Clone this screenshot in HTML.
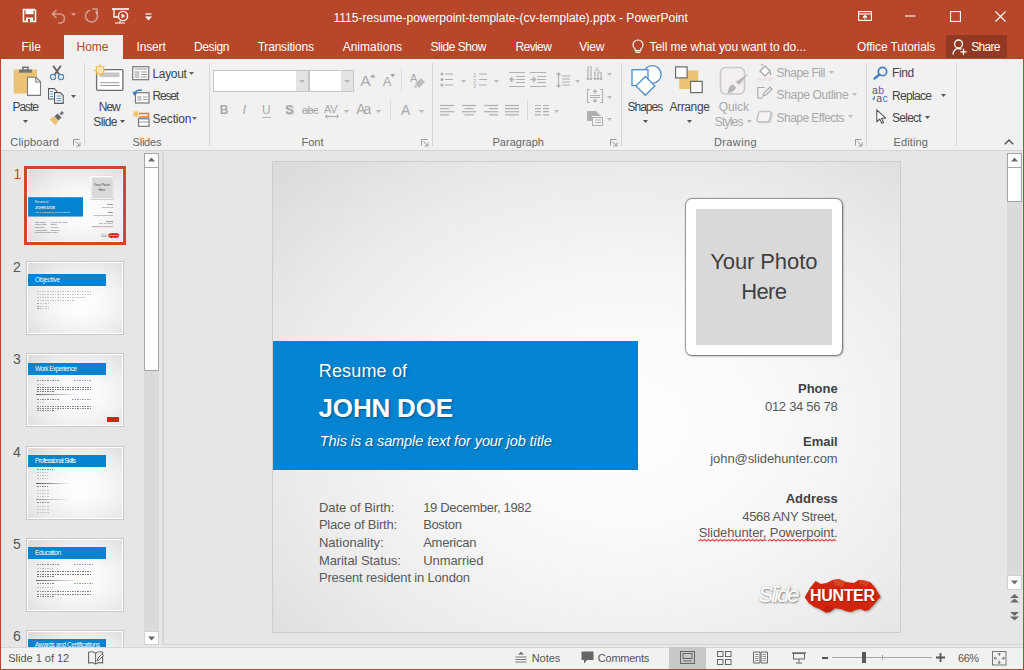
<!DOCTYPE html>
<html><head><meta charset="utf-8">
<style>
*{margin:0;padding:0;box-sizing:border-box}
html,body{width:1024px;height:670px;overflow:hidden;background:#e6e6e6;font-family:"Liberation Sans",sans-serif}
.a{position:absolute}
.t{position:absolute;white-space:nowrap;line-height:1;font-family:"Liberation Sans",sans-serif}
svg{overflow:visible}
</style></head><body>

<div class="a" style="left:0px;top:0px;width:1024px;height:59px;background:#b7472a;"></div>
<div class="a" style="left:0px;top:59px;width:1024px;height:91px;background:#f1f1f1;"></div>
<div class="a" style="left:0px;top:150px;width:1024px;height:1px;background:#d4d4d4;"></div>
<div class="a" style="left:0px;top:151px;width:1024px;height:493px;background:#e6e6e6;"></div>
<svg class="a" style="left:22px;top:8px;" width="15" height="15" viewBox="0 0 15 15"><path d="M1.5 1.5h11l1 1v11h-12z" fill="none" stroke="#fff" stroke-width="1.6"/>
<rect x="3.5" y="2" width="8" height="4.2" fill="#fff"/>
<rect x="4" y="9.5" width="7" height="4.5" fill="#fff"/><rect x="6" y="11" width="2" height="3" fill="#b7472a"/></svg>
<svg class="a" style="left:50px;top:8px;" width="16" height="15" viewBox="0 0 16 15"><path d="M3 6h7a4.5 4.5 0 0 1 0 9h-2" fill="none" stroke="rgba(255,255,255,.45)" stroke-width="1.6"/>
<path d="M6.5 2L2.5 6l4 4" fill="none" stroke="rgba(255,255,255,.45)" stroke-width="1.6"/></svg>
<svg class="a" style="left:71px;top:13px;" width="5" height="4" viewBox="0 0 5 4"><path d="M0 0h5L2.5 3z" fill="rgba(255,255,255,.45)"/></svg>
<svg class="a" style="left:84px;top:8px;" width="16" height="15" viewBox="0 0 16 15"><path d="M11.5 3.5A6 6 0 1 1 6 2.2" fill="none" stroke="rgba(255,255,255,.45)" stroke-width="1.6"/>
<path d="M8 1h5v5" fill="none" stroke="rgba(255,255,255,.45)" stroke-width="1.6"/></svg>
<svg class="a" style="left:112px;top:8px;" width="17" height="16" viewBox="0 0 17 16"><path d="M0 1h17" stroke="#fff" stroke-width="1.6"/>
<path d="M2 1v8h4" fill="none" stroke="#fff" stroke-width="1.3"/>
<circle cx="11" cy="8" r="4.6" fill="none" stroke="#fff" stroke-width="1.4"/>
<path d="M9.6 5.6v4.8l3.6-2.4z" fill="#fff"/>
<path d="M3 15h10M8 13v2" stroke="#fff" stroke-width="1.2"/></svg>
<svg class="a" style="left:145px;top:13px;" width="7" height="8" viewBox="0 0 7 8"><path d="M0.5 1h6" stroke="#fff" stroke-width="1.2"/><path d="M0 3.5h7L3.5 7.5z" fill="#fff"/></svg>
<div class="t" style="left:333.50px;top:12.04px;font-size:12px;color:#ffffff;letter-spacing:0.01px;">1115-resume-powerpoint-template-(cv-template).pptx - PowerPoint</div>
<svg class="a" style="left:858px;top:11px;" width="14" height="10" viewBox="0 0 14 10"><rect x="0.6" y="0.6" width="12.8" height="8.8" fill="none" stroke="#fff" stroke-width="1.1"/>
<path d="M0.6 3h12.8" stroke="#fff" stroke-width="1.1"/><path d="M7 8.5V4.5M5 6.5l2-2 2 2" fill="none" stroke="#fff" stroke-width="1.1"/></svg>
<svg class="a" style="left:905px;top:15px;" width="11" height="2" viewBox="0 0 11 2"><path d="M0 1h10.5" stroke="#fff" stroke-width="1.1"/></svg>
<svg class="a" style="left:950px;top:11px;" width="11" height="11" viewBox="0 0 11 11"><rect x="0.55" y="0.55" width="9.9" height="9.9" fill="none" stroke="#fff" stroke-width="1.1"/></svg>
<svg class="a" style="left:995px;top:11px;" width="11" height="11" viewBox="0 0 11 11"><path d="M0.5 0.5l10 10M10.5 0.5l-10 10" stroke="#fff" stroke-width="1.1"/></svg>
<div class="a" style="left:64px;top:35px;width:59px;height:24px;background:#f1f1f1;"></div>
<div class="t" style="left:21.50px;top:40.94px;font-size:12px;color:#ffffff;">File</div>
<div class="t" style="left:76.50px;top:40.94px;font-size:12px;color:#b7472a;">Home</div>
<div class="t" style="left:136.50px;top:40.94px;font-size:12px;color:#ffffff;letter-spacing:-0.15px;">Insert</div>
<div class="t" style="left:194.00px;top:40.94px;font-size:12px;color:#ffffff;letter-spacing:-0.4px;">Design</div>
<div class="t" style="left:257.70px;top:40.94px;font-size:12px;color:#ffffff;letter-spacing:-0.2px;">Transitions</div>
<div class="t" style="left:342.70px;top:40.94px;font-size:12px;color:#ffffff;">Animations</div>
<div class="t" style="left:430.50px;top:40.94px;font-size:12px;color:#ffffff;letter-spacing:-0.45px;">Slide Show</div>
<div class="t" style="left:515.50px;top:40.94px;font-size:12px;color:#ffffff;letter-spacing:-0.6px;">Review</div>
<div class="t" style="left:579.20px;top:40.94px;font-size:12px;color:#ffffff;letter-spacing:-0.2px;">View</div>
<svg class="a" style="left:632px;top:40px;" width="12" height="14" viewBox="0 0 12 14"><path d="M3.2 9.2C1.8 8 1 6.6 1 5a5 5 0 0 1 10 0c0 1.6-.8 3-2.2 4.2V10.6H3.2z" fill="none" stroke="#fff" stroke-width="1.1"/>
<path d="M3.5 12.3h5" stroke="#fff" stroke-width="1.1"/></svg>
<div class="t" style="left:649.50px;top:40.94px;font-size:12px;color:#ffffff;letter-spacing:-0.05px;">Tell me what you want to do...</div>
<div class="t" style="left:857.00px;top:40.94px;font-size:12px;color:#ffffff;letter-spacing:-0.1px;">Office Tutorials</div>
<div class="a" style="left:946px;top:35px;width:61px;height:23px;background:#933823;"></div>
<svg class="a" style="left:952px;top:39px;" width="15" height="16" viewBox="0 0 15 16"><circle cx="6.5" cy="5" r="4" fill="none" stroke="#fff" stroke-width="1.3"/>
<path d="M1 15.5c0-3.5 2.5-6 5.5-6 1.2 0 2.2.3 3 .8" fill="none" stroke="#fff" stroke-width="1.3"/>
<path d="M11.5 9.8v6.2M8.4 12.9h6.2" stroke="#fff" stroke-width="1.3"/></svg>
<div class="t" style="left:971.20px;top:40.94px;font-size:12px;color:#ffffff;letter-spacing:-0.7px;">Share</div>
<div class="a" style="left:84px;top:63px;width:1px;height:83px;background:#d6d6d6;"></div>
<div class="a" style="left:209px;top:63px;width:1px;height:83px;background:#d6d6d6;"></div>
<div class="a" style="left:432px;top:63px;width:1px;height:83px;background:#d6d6d6;"></div>
<div class="a" style="left:621px;top:63px;width:1px;height:83px;background:#d6d6d6;"></div>
<div class="a" style="left:866px;top:63px;width:1px;height:83px;background:#d6d6d6;"></div>
<div class="a" style="left:956px;top:63px;width:1px;height:83px;background:#d6d6d6;"></div>
<div class="t" style="left:10.30px;top:137.49px;font-size:11px;color:#666666;letter-spacing:0.201px;">Clipboard</div>
<svg class="a" style="left:73px;top:139px;" width="8" height="8" viewBox="0 0 8 8"><path d="M0.5 6.5V0.5H6.5" fill="none" stroke="#999" stroke-width="1"/><path d="M2.5 2.5l4.5 4.5M7 3.5V7H3.5" fill="none" stroke="#999" stroke-width="1"/></svg>
<div class="t" style="left:132.60px;top:137.49px;font-size:11px;color:#666666;letter-spacing:-0.234px;">Slides</div>
<div class="t" style="left:301.40px;top:137.49px;font-size:11px;color:#666666;letter-spacing:0.056px;">Font</div>
<svg class="a" style="left:421px;top:139px;" width="8" height="8" viewBox="0 0 8 8"><path d="M0.5 6.5V0.5H6.5" fill="none" stroke="#999" stroke-width="1"/><path d="M2.5 2.5l4.5 4.5M7 3.5V7H3.5" fill="none" stroke="#999" stroke-width="1"/></svg>
<div class="t" style="left:492.50px;top:137.49px;font-size:11px;color:#666666;letter-spacing:0.012px;">Paragraph</div>
<svg class="a" style="left:610px;top:139px;" width="8" height="8" viewBox="0 0 8 8"><path d="M0.5 6.5V0.5H6.5" fill="none" stroke="#999" stroke-width="1"/><path d="M2.5 2.5l4.5 4.5M7 3.5V7H3.5" fill="none" stroke="#999" stroke-width="1"/></svg>
<div class="t" style="left:714.00px;top:137.49px;font-size:11px;color:#666666;letter-spacing:0.376px;">Drawing</div>
<svg class="a" style="left:855px;top:139px;" width="8" height="8" viewBox="0 0 8 8"><path d="M0.5 6.5V0.5H6.5" fill="none" stroke="#999" stroke-width="1"/><path d="M2.5 2.5l4.5 4.5M7 3.5V7H3.5" fill="none" stroke="#999" stroke-width="1"/></svg>
<div class="t" style="left:893.60px;top:137.49px;font-size:11px;color:#666666;letter-spacing:0.124px;">Editing</div>
<svg class="a" style="left:1004px;top:139px;" width="10" height="6" viewBox="0 0 10 6"><path d="M0.8 5.2L5 1l4.2 4.2" fill="none" stroke="#555" stroke-width="1.5"/></svg>
<svg class="a" style="left:13px;top:66px;" width="30" height="31" viewBox="0 0 30 31"><rect x="0.7" y="3.5" width="23.3" height="24" fill="#ecc274"/>
<path d="M6 3.5h13v3.2H6z" fill="#767676"/><path d="M10 1.2h5v3h-5z" fill="none" stroke="#767676" stroke-width="1.6"/>
<path d="M14.5 11.3h8.5l4.5 4.5v13.6h-13z" fill="#fff" stroke="#7a7a7a" stroke-width="1.1"/>
<path d="M22.8 11.3v4.7h4.7" fill="none" stroke="#7a7a7a" stroke-width="1.1"/></svg>
<div class="t" style="left:12.40px;top:100.64px;font-size:12px;color:#444444;letter-spacing:-1.018px;">Paste</div>
<svg class="a" style="left:23px;top:120px;" width="5" height="3" viewBox="0 0 5 3"><path d="M0 0h5L2.5 3z" fill="#555"/></svg>
<svg class="a" style="left:49px;top:65px;" width="16" height="16" viewBox="0 0 16 16"><path d="M4.2 0.8l6 8.8M11.8 0.8L5.8 9.6" stroke="#606060" stroke-width="1.8"/>
<circle cx="4" cy="12" r="2.6" fill="none" stroke="#4a88c8" stroke-width="1.2"/>
<circle cx="12" cy="12" r="2.6" fill="none" stroke="#4a88c8" stroke-width="1.2"/></svg>
<svg class="a" style="left:48px;top:88px;" width="17" height="16" viewBox="0 0 17 16"><path d="M0.6 0.6h5.6l2.6 2.6V11H0.6z" fill="#fff" stroke="#555" stroke-width="1.1"/>
<path d="M2.2 3.5h3M2.2 6h3M2.2 8.5h3" stroke="#3f7fc1" stroke-width="0.9"/>
<path d="M6.6 4.6h5.6l3 3V15.4H6.6z" fill="#fff" stroke="#555" stroke-width="1.1"/>
<path d="M8.4 8h5M8.4 10.4h5M8.4 12.8h5" stroke="#3f7fc1" stroke-width="0.9"/></svg>
<svg class="a" style="left:71px;top:95px;" width="5" height="3" viewBox="0 0 5 3"><path d="M0 0h5L2.5 3z" fill="#555"/></svg>
<svg class="a" style="left:49px;top:110px;" width="16" height="16" viewBox="0 0 16 16"><path d="M0.5 9.5l4.5-3 4.5 4.5-3 4.5z" fill="#ecc274"/>
<path d="M5.5 6.5l3-3 4 4-3 3z" fill="#666"/><path d="M10.5 3.5l2.5-2.5 2 2-2.5 2.5z" fill="#777"/></svg>
<svg class="a" style="left:93px;top:64px;" width="31" height="28" viewBox="0 0 31 28"><rect x="3.6" y="5.6" width="26.3" height="20.8" rx="1.5" fill="#fff" stroke="#6e6e6e" stroke-width="1.3"/>
<rect x="7.2" y="8.4" width="19.2" height="4.8" fill="#c8c8c8"/>
<path d="M7.2 18.7h19.2M7.2 21.5h19.2" stroke="#9a9a9a" stroke-width="1"/>
<circle cx="7" cy="6.3" r="3.8" fill="#fff" stroke="#f3b440" stroke-width="1.2"/>
<g stroke="#f3b440" stroke-width="1.2"><path d="M7 0.3v1.6M7 10.7v1.6M1 6.3h1.6M11.4 6.3h1.6M2.8 2.1l1.1 1.1M10.1 9.4l1.1 1.1M11.2 2.1l-1.1 1.1M3.9 9.4l-1.1 1.1"/></g>
<circle cx="7" cy="6.3" r="2.6" fill="#fbe3a8"/></svg>
<div class="t" style="left:98.80px;top:100.64px;font-size:12px;color:#444444;letter-spacing:-1.008px;">New</div>
<div class="t" style="left:93.30px;top:116.44px;font-size:12px;color:#444444;letter-spacing:-0.647px;">Slide</div>
<svg class="a" style="left:120px;top:120px;" width="5" height="3" viewBox="0 0 5 3"><path d="M0 0h5L2.5 3z" fill="#555"/></svg>
<svg class="a" style="left:132px;top:66px;" width="18" height="15" viewBox="0 0 18 15"><rect x="0.7" y="0.7" width="16" height="13" fill="#fff" stroke="#777" stroke-width="1.2"/>
<path d="M2.5 3h12.5" stroke="#aaa" stroke-width="1.2"/><rect x="2.5" y="5" width="5" height="7" fill="#c8c8c8"/>
<path d="M9 6h6M9 8.5h6M9 11h6" stroke="#999" stroke-width="1"/></svg>
<div class="t" style="left:152.50px;top:68.44px;font-size:12px;color:#444444;letter-spacing:-0.343px;">Layout</div>
<svg class="a" style="left:189px;top:72px;" width="5" height="3" viewBox="0 0 5 3"><path d="M0 0h5L2.5 3z" fill="#666"/></svg>
<svg class="a" style="left:132px;top:88px;" width="18" height="16" viewBox="0 0 18 16"><rect x="3.5" y="4.7" width="13.5" height="10.3" fill="#fff" stroke="#777" stroke-width="1.2"/>
<rect x="5.5" y="8" width="4" height="5" fill="#c8c8c8"/><path d="M11 9h4.5M11 11.5h4.5" stroke="#999" stroke-width="1"/>
<path d="M2 6.5C3 3 6.5 1.2 10 2.5" fill="none" stroke="#3f7fc1" stroke-width="1.5"/><path d="M0.5 3.5L2 7.8 5.5 5z" fill="#3f7fc1"/></svg>
<div class="t" style="left:152.50px;top:90.44px;font-size:12px;color:#444444;letter-spacing:-1.186px;">Reset</div>
<svg class="a" style="left:132px;top:110px;" width="18" height="17" viewBox="0 0 18 17"><g stroke="#f3b440" stroke-width="1"><path d="M4 0.5v7M0.5 4h7M1.5 1.5l5 5M6.5 1.5l-5 5"/></g>
<path d="M7 3.5h9.5v3.5H7" fill="none" stroke="#e8782c" stroke-width="1.4"/>
<rect x="6.5" y="8.8" width="10.5" height="7.5" fill="#fff" stroke="#777" stroke-width="1.2"/><path d="M7 12h9.5" stroke="#999" stroke-width="1"/></svg>
<div class="t" style="left:152.50px;top:113.04px;font-size:12px;color:#444444;letter-spacing:-0.169px;">Section</div>
<svg class="a" style="left:192px;top:117px;" width="5" height="3" viewBox="0 0 5 3"><path d="M0 0h5L2.5 3z" fill="#666"/></svg>
<div class="a" style="left:213px;top:70px;width:96px;height:22px;background:#fff;border:1px solid #c6c6c6"></div>
<div class="a" style="left:296px;top:71px;width:12px;height:20px;background:#e3e3e3;"></div>
<svg class="a" style="left:299px;top:80px;" width="6" height="3" viewBox="0 0 6 3"><path d="M0 0h6L3 3z" fill="#b3b3b3"/></svg>
<div class="a" style="left:309px;top:70px;width:45px;height:22px;background:#fff;border:1px solid #c6c6c6"></div>
<div class="a" style="left:341px;top:71px;width:12px;height:20px;background:#e3e3e3;"></div>
<svg class="a" style="left:344px;top:80px;" width="6" height="3" viewBox="0 0 6 3"><path d="M0 0h6L3 3z" fill="#b3b3b3"/></svg>
<div class="t" style="left:360.20px;top:72.98px;font-size:15.5px;color:#a8a8a8;">A</div>
<svg class="a" style="left:369.5px;top:73.5px;" width="5.5" height="3.5" viewBox="0 0 5.5 3.5"><path d="M0 3.5L2.75 0 5.5 3.5z" fill="#a8a8a8"/></svg>
<div class="t" style="left:382.80px;top:75.10px;font-size:13px;color:#a8a8a8;">A</div>
<svg class="a" style="left:390px;top:73.5px;" width="5.5" height="3.5" viewBox="0 0 5.5 3.5"><path d="M0 0h5.5L2.75 3.5z" fill="#a8a8a8"/></svg>
<div class="a" style="left:401px;top:69px;width:1px;height:22px;background:#d9d9d9;"></div>
<svg class="a" style="left:410px;top:72px;" width="15" height="17" viewBox="0 0 15 17"><text x="0" y="10" font-family="Liberation Sans" font-size="11" fill="#a8a8a8">A</text>
<path d="M5 12l6-6 4 4-6 6z" fill="#bdbdbd"/><path d="M4 13.5l2.5 2.5" stroke="#bdbdbd" stroke-width="1.5"/></svg>
<div class="t" style="left:219.80px;top:104.14px;font-size:12px;color:#a8a8a8;font-weight:bold;">B</div>
<div class="t" style="left:242.50px;top:103.30px;font-size:13px;color:#a8a8a8;font-style:italic;font-family:"Liberation Serif";">I</div>
<div class="t" style="left:262.00px;top:104.14px;font-size:12px;color:#a8a8a8;">U</div>
<div class="a" style="left:262px;top:117px;width:9px;height:1px;background:#b8b8b8;"></div>
<div class="t" style="left:285.00px;top:103.30px;font-size:13px;color:#a8a8a8;font-weight:bold;text-shadow:1px 1px 1px #ccc;">S</div>
<div class="t" style="left:302.00px;top:104.99px;font-size:11px;color:#a8a8a8;letter-spacing:-0.5px;">abc</div>
<div class="a" style="left:302px;top:110px;width:16px;height:1px;background:#a8a8a8;"></div>
<div class="t" style="left:324.00px;top:103.69px;font-size:11px;color:#a8a8a8;letter-spacing:-0.3px;">AV</div>
<svg class="a" style="left:324px;top:114px;" width="16" height="5" viewBox="0 0 16 5"><path d="M1.5 2.5h13" stroke="#a8a8a8" stroke-width="1"/><path d="M3.5 0.5l-2 2 2 2M12.5 0.5l2 2-2 2" fill="none" stroke="#a8a8a8" stroke-width="1"/></svg>
<svg class="a" style="left:344px;top:110px;" width="5" height="3" viewBox="0 0 5 3"><path d="M0 0h5L2.5 3z" fill="#b8b8b8"/></svg>
<div class="t" style="left:356.30px;top:102.45px;font-size:14px;color:#a8a8a8;letter-spacing:-2.125px;">Aa</div>
<svg class="a" style="left:376px;top:110px;" width="5" height="3" viewBox="0 0 5 3"><path d="M0 0h5L2.5 3z" fill="#b8b8b8"/></svg>
<div class="a" style="left:390px;top:100px;width:1px;height:21px;background:#d9d9d9;"></div>
<div class="t" style="left:400.90px;top:103.15px;font-size:14px;color:#a8a8a8;">A</div>
<svg class="a" style="left:419px;top:110px;" width="5" height="3" viewBox="0 0 5 3"><path d="M0 0h5L2.5 3z" fill="#b8b8b8"/></svg>
<svg class="a" style="left:440px;top:72px;" width="15" height="16" viewBox="0 0 15 16"><circle cx="2" cy="2" r="1.5" fill="#b0b0b0"/><circle cx="2" cy="7.5" r="1.5" fill="#b0b0b0"/><circle cx="2" cy="13" r="1.5" fill="#b0b0b0"/>
<path d="M5 2h8M5 7.5h8M5 13h8" stroke="#b0b0b0" stroke-width="1.2"/></svg>
<svg class="a" style="left:461px;top:80px;" width="5" height="3" viewBox="0 0 5 3"><path d="M0 0h5L2.5 3z" fill="#bbb"/></svg>
<svg class="a" style="left:473px;top:71px;" width="15" height="17" viewBox="0 0 15 17"><text x="0" y="6" font-family="Liberation Sans" font-size="6" fill="#b0b0b0">1</text><text x="0" y="11.5" font-family="Liberation Sans" font-size="6" fill="#b0b0b0">2</text><text x="0" y="17" font-family="Liberation Sans" font-size="6" fill="#b0b0b0">3</text>
<path d="M6 3h8M6 8.5h8M6 14h8" stroke="#b0b0b0" stroke-width="1.2"/></svg>
<svg class="a" style="left:494px;top:80px;" width="5" height="3" viewBox="0 0 5 3"><path d="M0 0h5L2.5 3z" fill="#bbb"/></svg>
<svg class="a" style="left:509px;top:72px;" width="16" height="15" viewBox="0 0 16 15"><path d="M0 0.5h16M7 4.5h9M7 7.5h9M7 10.5h9M0 14.5h16" stroke="#b0b0b0" stroke-width="1.2"/>
<path d="M5.5 7.5H1M3.5 5l-2.5 2.5 2.5 2.5" fill="none" stroke="#b0b0b0" stroke-width="1.4"/></svg>
<svg class="a" style="left:530px;top:72px;" width="16" height="15" viewBox="0 0 16 15"><path d="M0 0.5h16M7 4.5h9M7 7.5h9M7 10.5h9M0 14.5h16" stroke="#b0b0b0" stroke-width="1.2"/>
<path d="M0.5 7.5H5M3 5l2.5 2.5L3 10" fill="none" stroke="#b0b0b0" stroke-width="1.4"/></svg>
<svg class="a" style="left:556px;top:72px;" width="14" height="16" viewBox="0 0 14 16"><path d="M2.5 1v14M0.5 3l2-2 2 2M0.5 13l2 2 2-2" fill="none" stroke="#b0b0b0" stroke-width="1.2"/>
<path d="M6 4h8M6 7h8M6 10h8M6 13h8" stroke="#b0b0b0" stroke-width="1.2"/></svg>
<svg class="a" style="left:575px;top:80px;" width="5" height="3" viewBox="0 0 5 3"><path d="M0 0h5L2.5 3z" fill="#bbb"/></svg>
<svg class="a" style="left:587px;top:66px;" width="16" height="15" viewBox="0 0 16 15"><path d="M1 0v14M4 0v14M8 6v8M11 6v8M14 6v8" stroke="#b0b0b0" stroke-width="1.2"/>
<path d="M6.5 12l1.5 2 1.5-2M9.5 12l1.5 2 1.5-2M12.5 12l1.5 2 1.5-2M-.5 12l1.5 2 1.5-2M2.5 12l1.5 2 1.5-2" fill="none" stroke="#b0b0b0" stroke-width="1"/>
<text x="7" y="7" font-family="Liberation Sans" font-size="9" fill="#b0b0b0">A</text></svg>
<svg class="a" style="left:607px;top:73px;" width="5" height="3" viewBox="0 0 5 3"><path d="M0 0h5L2.5 3z" fill="#bbb"/></svg>
<svg class="a" style="left:587px;top:89px;" width="16" height="14" viewBox="0 0 16 14"><path d="M3 0.5H0.5v13H3M13 0.5h2.5v13H13" fill="none" stroke="#b0b0b0" stroke-width="1.1"/>
<path d="M3 6.5h10M3 8.5h10" stroke="#b0b0b0" stroke-width="1"/>
<path d="M8 1v4M6 3l2-2 2 2M8 13V9.5M6 11l2 2 2-2" fill="none" stroke="#b0b0b0" stroke-width="1.1"/></svg>
<svg class="a" style="left:607px;top:96px;" width="5" height="3" viewBox="0 0 5 3"><path d="M0 0h5L2.5 3z" fill="#bbb"/></svg>
<svg class="a" style="left:587px;top:111px;" width="16" height="15" viewBox="0 0 16 15"><path d="M0 0h9l5 5H5v5H0z" fill="#b0b0b0"/>
<rect x="5.5" y="6.5" width="10" height="8" fill="#f5f2f5" stroke="#b0b0b0" stroke-width="1"/>
<path d="M8 9h6M8 11.5h6" stroke="#b0b0b0" stroke-width="1"/></svg>
<svg class="a" style="left:607px;top:118px;" width="5" height="3" viewBox="0 0 5 3"><path d="M0 0h5L2.5 3z" fill="#bbb"/></svg>
<svg class="a" style="left:440px;top:105px;" width="14" height="11" viewBox="0 0 14 11"><path d="M0 0.5h14" stroke="#b0b0b0" stroke-width="1.2"/><path d="M0 3.6h9" stroke="#b0b0b0" stroke-width="1.2"/><path d="M0 6.7h14" stroke="#b0b0b0" stroke-width="1.2"/><path d="M0 9.8h9" stroke="#b0b0b0" stroke-width="1.2"/></svg>
<svg class="a" style="left:462px;top:105px;" width="14" height="11" viewBox="0 0 14 11"><path d="M0 0.5h14" stroke="#b0b0b0" stroke-width="1.2"/><path d="M2.5 3.6h9" stroke="#b0b0b0" stroke-width="1.2"/><path d="M0 6.7h14" stroke="#b0b0b0" stroke-width="1.2"/><path d="M2.5 9.8h9" stroke="#b0b0b0" stroke-width="1.2"/></svg>
<svg class="a" style="left:484px;top:105px;" width="14" height="11" viewBox="0 0 14 11"><path d="M0 0.5h14" stroke="#b0b0b0" stroke-width="1.2"/><path d="M5 3.6h9" stroke="#b0b0b0" stroke-width="1.2"/><path d="M0 6.7h14" stroke="#b0b0b0" stroke-width="1.2"/><path d="M5 9.8h9" stroke="#b0b0b0" stroke-width="1.2"/></svg>
<svg class="a" style="left:505px;top:105px;" width="14" height="11" viewBox="0 0 14 11"><path d="M0 0.5h14" stroke="#b0b0b0" stroke-width="1.2"/><path d="M0 3.6h14" stroke="#b0b0b0" stroke-width="1.2"/><path d="M0 6.7h14" stroke="#b0b0b0" stroke-width="1.2"/><path d="M0 9.8h14" stroke="#b0b0b0" stroke-width="1.2"/></svg>
<div class="a" style="left:527px;top:100px;width:1px;height:21px;background:#d9d9d9;"></div>
<svg class="a" style="left:535px;top:105px;" width="14" height="11" viewBox="0 0 14 11"><path d="M0 0.5h6M8 0.5h6M0 3.6h6M8 3.6h6M0 6.7h6M8 6.7h6M0 9.8h6M8 9.8h6" stroke="#b0b0b0" stroke-width="1.2"/></svg>
<svg class="a" style="left:554px;top:110px;" width="5" height="3" viewBox="0 0 5 3"><path d="M0 0h5L2.5 3z" fill="#bbb"/></svg>
<svg class="a" style="left:630px;top:65px;" width="34" height="38" viewBox="0 0 34 38"><circle cx="22.3" cy="9.5" r="8.8" fill="#fff" stroke="#4f8ccb" stroke-width="1.3"/>
<rect x="2" y="4.7" width="16" height="15.8" fill="#fff" stroke="#4f8ccb" stroke-width="1.3"/>
<path d="M15.4 11.5l9.4 9.4-9.4 9.4-9.4-9.4z" fill="#fff" stroke="#4f8ccb" stroke-width="1.3"/></svg>
<div class="t" style="left:627.50px;top:100.64px;font-size:12px;color:#444444;letter-spacing:-0.997px;">Shapes</div>
<svg class="a" style="left:643px;top:120px;" width="5" height="3" viewBox="0 0 5 3"><path d="M0 0h5L2.5 3z" fill="#555"/></svg>
<svg class="a" style="left:674px;top:66px;" width="30" height="28" viewBox="0 0 30 28"><rect x="5.2" y="4.5" width="19" height="18.5" fill="#ecc274"/>
<rect x="1.6" y="0.9" width="11.5" height="11" fill="#fff" stroke="#6a6a6a" stroke-width="1.2"/>
<rect x="16.6" y="15.4" width="11.6" height="11.2" fill="#fff" stroke="#6a6a6a" stroke-width="1.2"/></svg>
<div class="t" style="left:669.40px;top:100.64px;font-size:12px;color:#444444;letter-spacing:-0.365px;">Arrange</div>
<svg class="a" style="left:687px;top:120px;" width="5" height="3" viewBox="0 0 5 3"><path d="M0 0h5L2.5 3z" fill="#555"/></svg>
<svg class="a" style="left:719px;top:66px;" width="30" height="30" viewBox="0 0 30 30"><rect x="1.5" y="1.5" width="24" height="26.5" rx="5" fill="#f3eff3" stroke="#c9c9c9" stroke-width="1.6"/>
<path d="M29.5 7.5L20 19l-3.2-3.2z" fill="#b5b5b5"/><path d="M16.5 16.5l3 3-1.5 1.5-3-3z" fill="#f1f1f1"/>
<path d="M14.2 18.5c-2.5 0-4.6 2.6-5.6 8.8 4.6-.8 7.6-2.8 8.4-6z" fill="#b5b5b5"/></svg>
<div class="t" style="left:718.80px;top:100.64px;font-size:12px;color:#a8a8a8;letter-spacing:-0.118px;">Quick</div>
<div class="t" style="left:714.70px;top:116.44px;font-size:12px;color:#a8a8a8;letter-spacing:-0.774px;">Styles</div>
<svg class="a" style="left:747px;top:120px;" width="5" height="3" viewBox="0 0 5 3"><path d="M0 0h5L2.5 3z" fill="#bbb"/></svg>
<svg class="a" style="left:757px;top:64px;" width="17" height="17" viewBox="0 0 17 17"><path d="M3 7l5-5 5 5-5 5z" fill="#fff" stroke="#a8a8a8" stroke-width="1.3"/>
<path d="M6 1.5L4.5 0" stroke="#a8a8a8" stroke-width="1.2"/><path d="M13 7.5c1.5 1.5 2 3 1 3.5s-2-1.5-1-3.5z" fill="#a8a8a8"/>
<rect x="0.5" y="14" width="15" height="2.5" fill="#eee0e4"/></svg>
<div class="t" style="left:776.60px;top:67.04px;font-size:12px;color:#a8a8a8;letter-spacing:-0.518px;">Shape Fill</div>
<svg class="a" style="left:829px;top:71px;" width="5" height="3" viewBox="0 0 5 3"><path d="M0 0h5L2.5 3z" fill="#bbb"/></svg>
<svg class="a" style="left:757px;top:86px;" width="16" height="13" viewBox="0 0 16 13"><path d="M7.5 1.5H0.8v10.5h5" fill="none" stroke="#a8a8a8" stroke-width="1.1"/>
<path d="M6 10l1-3 6-6 2 2-6 6z" fill="none" stroke="#a8a8a8" stroke-width="1.1"/></svg>
<div class="t" style="left:776.60px;top:89.04px;font-size:12px;color:#a8a8a8;letter-spacing:-0.336px;">Shape Outline</div>
<svg class="a" style="left:852px;top:93px;" width="5" height="3" viewBox="0 0 5 3"><path d="M0 0h5L2.5 3z" fill="#bbb"/></svg>
<svg class="a" style="left:757px;top:110px;filter:drop-shadow(1px 1px 0.5px rgba(0,0,0,.15))" width="15" height="13" viewBox="0 0 15 13"><path d="M3.5 1.5h9c1.2 0 1.8.8 1.5 2l-1.6 6.5c-.3 1.1-1 1.6-2 1.6h-9c-1.1 0-1.7-.8-1.4-1.9l1.6-6.5c.3-1.1 1-1.7 1.9-1.7z" fill="#f6f2f6" stroke="#c4c4c4" stroke-width="1.4"/></svg>
<div class="t" style="left:776.60px;top:111.64px;font-size:12px;color:#a8a8a8;letter-spacing:-0.546px;">Shape Effects</div>
<svg class="a" style="left:848px;top:115px;" width="5" height="3" viewBox="0 0 5 3"><path d="M0 0h5L2.5 3z" fill="#bbb"/></svg>
<svg class="a" style="left:873px;top:66px;" width="15" height="13" viewBox="0 0 15 13"><circle cx="9.5" cy="5.5" r="4.2" fill="none" stroke="#3f7fc1" stroke-width="1.7"/>
<path d="M6.5 8.5L1.5 12.5" stroke="#3f7fc1" stroke-width="2.4" stroke-linecap="round"/></svg>
<div class="t" style="left:892.00px;top:67.04px;font-size:12px;color:#444444;letter-spacing:-0.415px;">Find</div>
<svg class="a" style="left:872px;top:86px;" width="17" height="17" viewBox="0 0 17 17"><text x="0" y="8" font-family="Liberation Sans" font-size="10.5" fill="#555">a</text>
<text x="6.2" y="8" font-family="Liberation Sans" font-size="10.5" fill="#8a4fb8">b</text>
<text x="4.2" y="16" font-family="Liberation Sans" font-size="10.5" fill="#555">a</text>
<text x="10.4" y="16" font-family="Liberation Sans" font-size="10.5" fill="#3f7fc1">c</text>
<path d="M2.3 10v3H0.8M2 11.8l-1.2 1.2 1.2 1.2" fill="none" stroke="#3f7fc1" stroke-width="1"/></svg>
<div class="t" style="left:892.00px;top:89.84px;font-size:12px;color:#444444;letter-spacing:-0.672px;">Replace</div>
<svg class="a" style="left:941px;top:94px;" width="5" height="3" viewBox="0 0 5 3"><path d="M0 0h5L2.5 3z" fill="#555"/></svg>
<svg class="a" style="left:876px;top:109px;" width="10" height="15" viewBox="0 0 10 15"><path d="M0.8 0.8v12l3-2.8 2 4.2 1.8-.8-2-4.2h4z" fill="#fff" stroke="#555" stroke-width="1.1" stroke-linejoin="round"/></svg>
<div class="t" style="left:892.00px;top:111.84px;font-size:12px;color:#444444;letter-spacing:-0.729px;">Select</div>
<svg class="a" style="left:925px;top:116px;" width="5" height="3" viewBox="0 0 5 3"><path d="M0 0h5L2.5 3z" fill="#555"/></svg>
<div class="a" style="left:144px;top:153px;width:15px;height:492px;background:#dadada;"></div>
<div class="a" style="left:144px;top:153px;width:15px;height:15px;background:#fff;border:1px solid #a6a6a6"></div>
<svg class="a" style="left:148px;top:157px;" width="7" height="5" viewBox="0 0 7 5"><path d="M0 4.6L3.5 0.6 7 4.6z" fill="#686868"/></svg>
<div class="a" style="left:144px;top:167px;width:15px;height:204px;background:#fff;border:1px solid #a6a6a6"></div>
<div class="a" style="left:144px;top:631px;width:15px;height:14px;background:#fff;border:1px solid #d0d0d0"></div>
<svg class="a" style="left:148px;top:636px;" width="7" height="5" viewBox="0 0 7 5"><path d="M0 0.4h7L3.5 4.4z" fill="#686868"/></svg>
<div class="a" style="left:162px;top:153px;width:2px;height:492px;background:#d6d6d6;"></div>
<div class="a" style="left:24px;top:166px;width:102px;height:79px;background:transparent;border:3px solid #d24726"></div>
<div class="a" style="left:27px;top:169px;width:96px;height:73px;background:#fff;"></div>
<div class="t" style="left:13.40px;top:166.95px;font-size:14px;color:#d24726;">1</div>
<div class="a" style="left:26px;top:261px;width:98px;height:74px;background:#fff;border:1px solid #c9c9c9"></div>
<div class="t" style="left:13.00px;top:259.65px;font-size:14px;color:#555;">2</div>
<div class="a" style="left:26px;top:353px;width:98px;height:74px;background:#fff;border:1px solid #c9c9c9"></div>
<div class="t" style="left:13.00px;top:351.65px;font-size:14px;color:#555;">3</div>
<div class="a" style="left:26px;top:446px;width:98px;height:74px;background:#fff;border:1px solid #c9c9c9"></div>
<div class="t" style="left:13.00px;top:444.65px;font-size:14px;color:#555;">4</div>
<div class="a" style="left:26px;top:538px;width:98px;height:74px;background:#fff;border:1px solid #c9c9c9"></div>
<div class="t" style="left:13.00px;top:536.65px;font-size:14px;color:#555;">5</div>
<div class="a" style="left:26px;top:630px;width:98px;height:74px;background:#fff;border:1px solid #c9c9c9"></div>
<div class="t" style="left:13.00px;top:628.65px;font-size:14px;color:#555;">6</div>
<div class="a" style="left:28px;top:263px;width:94px;height:70px;background:radial-gradient(ellipse 75% 75% at 56% 56%, #ffffff 0%, #fafafa 30%, #ececec 70%, #dcdcdc 100%);overflow:hidden"><div class="a" style="left:0;top:11px;width:78px;height:12px;background:#0383d0"></div><div class="t" style="left:7px;top:14px;font-size:6.5px;color:#fff;letter-spacing:-0.260px">Objective</div><div class="a" style="left:9px;top:28px;width:55px;height:1px;background:repeating-linear-gradient(90deg,#c2c2c2 0 2px,rgba(0,0,0,0) 2px 2.6px,#c2c2c2 2.6px 4px,rgba(0,0,0,0) 4px 5px)"></div><div class="a" style="left:9px;top:31px;width:55px;height:1px;background:repeating-linear-gradient(90deg,#c2c2c2 0 2px,rgba(0,0,0,0) 2px 2.6px,#c2c2c2 2.6px 4px,rgba(0,0,0,0) 4px 5px)"></div><div class="a" style="left:9px;top:34px;width:49px;height:1px;background:repeating-linear-gradient(90deg,#c2c2c2 0 2px,rgba(0,0,0,0) 2px 2.6px,#c2c2c2 2.6px 4px,rgba(0,0,0,0) 4px 5px)"></div><div class="a" style="left:9px;top:37px;width:38px;height:1px;background:repeating-linear-gradient(90deg,#c2c2c2 0 2px,rgba(0,0,0,0) 2px 2.6px,#c2c2c2 2.6px 4px,rgba(0,0,0,0) 4px 5px)"></div><div class="a" style="left:9px;top:40.0px;width:2px;height:1px;background:repeating-linear-gradient(90deg,#a0a0a0 0 2px,rgba(0,0,0,0) 2px 2.6px,#a0a0a0 2.6px 4px,rgba(0,0,0,0) 4px 5px)"></div><div class="a" style="left:12px;top:40.0px;width:9px;height:1px;background:repeating-linear-gradient(90deg,#c4c4c4 0 2px,rgba(0,0,0,0) 2px 2.6px,#c4c4c4 2.6px 4px,rgba(0,0,0,0) 4px 5px)"></div><div class="a" style="left:9px;top:42.6px;width:2px;height:1px;background:repeating-linear-gradient(90deg,#a0a0a0 0 2px,rgba(0,0,0,0) 2px 2.6px,#a0a0a0 2.6px 4px,rgba(0,0,0,0) 4px 5px)"></div><div class="a" style="left:12px;top:42.6px;width:9px;height:1px;background:repeating-linear-gradient(90deg,#c4c4c4 0 2px,rgba(0,0,0,0) 2px 2.6px,#c4c4c4 2.6px 4px,rgba(0,0,0,0) 4px 5px)"></div><div class="a" style="left:9px;top:45.2px;width:2px;height:1px;background:repeating-linear-gradient(90deg,#a0a0a0 0 2px,rgba(0,0,0,0) 2px 2.6px,#a0a0a0 2.6px 4px,rgba(0,0,0,0) 4px 5px)"></div><div class="a" style="left:12px;top:45.2px;width:9px;height:1px;background:repeating-linear-gradient(90deg,#c4c4c4 0 2px,rgba(0,0,0,0) 2px 2.6px,#c4c4c4 2.6px 4px,rgba(0,0,0,0) 4px 5px)"></div></div>
<div class="a" style="left:28px;top:355px;width:94px;height:70px;background:radial-gradient(ellipse 75% 75% at 56% 56%, #ffffff 0%, #fafafa 30%, #ececec 70%, #dcdcdc 100%);overflow:hidden"><div class="a" style="left:0;top:8px;width:78px;height:12px;background:#0383d0"></div><div class="t" style="left:7px;top:11px;font-size:6.5px;color:#fff;letter-spacing:-0.525px">Work Experience</div><div class="a" style="left:9px;top:25px;width:22px;height:1px;background:repeating-linear-gradient(90deg,#888 0 2px,rgba(0,0,0,0) 2px 2.6px,#888 2.6px 4px,rgba(0,0,0,0) 4px 5px)"></div><div class="a" style="left:46px;top:25px;width:18px;height:1px;background:repeating-linear-gradient(90deg,#8e9ed8 0 2px,rgba(0,0,0,0) 2px 2.6px,#8e9ed8 2.6px 4px,rgba(0,0,0,0) 4px 5px)"></div><div class="a" style="left:9px;top:29px;width:8px;height:1px;background:repeating-linear-gradient(90deg,#c4c4c4 0 2px,rgba(0,0,0,0) 2px 2.6px,#c4c4c4 2.6px 4px,rgba(0,0,0,0) 4px 5px)"></div><div class="a" style="left:9px;top:31.5px;width:55px;height:1px;background:repeating-linear-gradient(90deg,#777 0 2px,rgba(0,0,0,0) 2px 2.6px,#777 2.6px 4px,rgba(0,0,0,0) 4px 5px)"></div><div class="a" style="left:9px;top:33.8px;width:55px;height:1px;background:repeating-linear-gradient(90deg,#777 0 2px,rgba(0,0,0,0) 2px 2.6px,#777 2.6px 4px,rgba(0,0,0,0) 4px 5px)"></div><div class="a" style="left:9px;top:36.1px;width:18px;height:1px;background:repeating-linear-gradient(90deg,#777 0 2px,rgba(0,0,0,0) 2px 2.6px,#777 2.6px 4px,rgba(0,0,0,0) 4px 5px)"></div><div class="a" style="left:8px;top:39px;width:42px;height:1px;background:linear-gradient(90deg,#666,rgba(120,120,120,0))"></div><div class="a" style="left:9px;top:43.5px;width:22px;height:1px;background:repeating-linear-gradient(90deg,#888 0 2px,rgba(0,0,0,0) 2px 2.6px,#888 2.6px 4px,rgba(0,0,0,0) 4px 5px)"></div><div class="a" style="left:44px;top:43.5px;width:20px;height:1px;background:repeating-linear-gradient(90deg,#8e9ed8 0 2px,rgba(0,0,0,0) 2px 2.6px,#8e9ed8 2.6px 4px,rgba(0,0,0,0) 4px 5px)"></div><div class="a" style="left:9px;top:47px;width:8px;height:1px;background:repeating-linear-gradient(90deg,#c4c4c4 0 2px,rgba(0,0,0,0) 2px 2.6px,#c4c4c4 2.6px 4px,rgba(0,0,0,0) 4px 5px)"></div><div class="a" style="left:9px;top:50.5px;width:55px;height:1px;background:repeating-linear-gradient(90deg,#888 0 2px,rgba(0,0,0,0) 2px 2.6px,#888 2.6px 4px,rgba(0,0,0,0) 4px 5px)"></div><div class="a" style="left:9px;top:52.9px;width:55px;height:1px;background:repeating-linear-gradient(90deg,#888 0 2px,rgba(0,0,0,0) 2px 2.6px,#888 2.6px 4px,rgba(0,0,0,0) 4px 5px)"></div><div class="a" style="left:9px;top:55.3px;width:18px;height:1px;background:repeating-linear-gradient(90deg,#888 0 2px,rgba(0,0,0,0) 2px 2.6px,#888 2.6px 4px,rgba(0,0,0,0) 4px 5px)"></div><div class="a" style="left:79px;top:61.5px;width:12px;height:5px;background:#d0240c"></div></div>
<div class="a" style="left:28px;top:448px;width:94px;height:70px;background:radial-gradient(ellipse 75% 75% at 56% 56%, #ffffff 0%, #fafafa 30%, #ececec 70%, #dcdcdc 100%);overflow:hidden"><div class="a" style="left:0;top:7px;width:78px;height:12px;background:#0383d0"></div><div class="t" style="left:7px;top:10px;font-size:6.5px;color:#fff;letter-spacing:-0.649px">Professional Skills</div><div class="a" style="left:9px;top:21px;width:16px;height:1px;background:repeating-linear-gradient(90deg,#888 0 2px,rgba(0,0,0,0) 2px 2.6px,#888 2.6px 4px,rgba(0,0,0,0) 4px 5px)"></div><div class="a" style="left:9px;top:24px;width:11px;height:1px;background:repeating-linear-gradient(90deg,#c0c0c0 0 2px,rgba(0,0,0,0) 2px 2.6px,#c0c0c0 2.6px 4px,rgba(0,0,0,0) 4px 5px)"></div><div class="a" style="left:9px;top:27px;width:11px;height:1px;background:repeating-linear-gradient(90deg,#c0c0c0 0 2px,rgba(0,0,0,0) 2px 2.6px,#c0c0c0 2.6px 4px,rgba(0,0,0,0) 4px 5px)"></div><div class="a" style="left:9px;top:30px;width:11px;height:1px;background:repeating-linear-gradient(90deg,#c0c0c0 0 2px,rgba(0,0,0,0) 2px 2.6px,#c0c0c0 2.6px 4px,rgba(0,0,0,0) 4px 5px)"></div><div class="a" style="left:8px;top:35px;width:34px;height:1px;background:linear-gradient(90deg,#555,rgba(120,120,120,0))"></div><div class="a" style="left:9px;top:38px;width:11px;height:1px;background:repeating-linear-gradient(90deg,#888 0 2px,rgba(0,0,0,0) 2px 2.6px,#888 2.6px 4px,rgba(0,0,0,0) 4px 5px)"></div><div class="a" style="left:9px;top:42px;width:12px;height:1px;background:repeating-linear-gradient(90deg,#c4c4c4 0 2px,rgba(0,0,0,0) 2px 2.6px,#c4c4c4 2.6px 4px,rgba(0,0,0,0) 4px 5px)"></div><div class="a" style="left:9px;top:45px;width:12px;height:1px;background:repeating-linear-gradient(90deg,#c4c4c4 0 2px,rgba(0,0,0,0) 2px 2.6px,#c4c4c4 2.6px 4px,rgba(0,0,0,0) 4px 5px)"></div><div class="a" style="left:9px;top:48px;width:12px;height:1px;background:repeating-linear-gradient(90deg,#c4c4c4 0 2px,rgba(0,0,0,0) 2px 2.6px,#c4c4c4 2.6px 4px,rgba(0,0,0,0) 4px 5px)"></div><div class="a" style="left:8px;top:51px;width:34px;height:1px;background:linear-gradient(90deg,#999,rgba(120,120,120,0))"></div><div class="a" style="left:9px;top:54px;width:12px;height:1px;background:repeating-linear-gradient(90deg,#888 0 2px,rgba(0,0,0,0) 2px 2.6px,#888 2.6px 4px,rgba(0,0,0,0) 4px 5px)"></div><div class="a" style="left:9px;top:58px;width:12px;height:1px;background:repeating-linear-gradient(90deg,#c4c4c4 0 2px,rgba(0,0,0,0) 2px 2.6px,#c4c4c4 2.6px 4px,rgba(0,0,0,0) 4px 5px)"></div><div class="a" style="left:9px;top:61px;width:12px;height:1px;background:repeating-linear-gradient(90deg,#c4c4c4 0 2px,rgba(0,0,0,0) 2px 2.6px,#c4c4c4 2.6px 4px,rgba(0,0,0,0) 4px 5px)"></div><div class="a" style="left:9px;top:64px;width:12px;height:1px;background:repeating-linear-gradient(90deg,#c4c4c4 0 2px,rgba(0,0,0,0) 2px 2.6px,#c4c4c4 2.6px 4px,rgba(0,0,0,0) 4px 5px)"></div></div>
<div class="a" style="left:28px;top:540px;width:94px;height:70px;background:radial-gradient(ellipse 75% 75% at 56% 56%, #ffffff 0%, #fafafa 30%, #ececec 70%, #dcdcdc 100%);overflow:hidden"><div class="a" style="left:0;top:7px;width:78px;height:12px;background:#0383d0"></div><div class="t" style="left:7px;top:10px;font-size:6.5px;color:#fff;letter-spacing:-0.359px">Education</div><div class="a" style="left:9px;top:24px;width:22px;height:1px;background:repeating-linear-gradient(90deg,#888 0 2px,rgba(0,0,0,0) 2px 2.6px,#888 2.6px 4px,rgba(0,0,0,0) 4px 5px)"></div><div class="a" style="left:46px;top:24px;width:20px;height:1px;background:repeating-linear-gradient(90deg,#8e9ed8 0 2px,rgba(0,0,0,0) 2px 2.6px,#8e9ed8 2.6px 4px,rgba(0,0,0,0) 4px 5px)"></div><div class="a" style="left:9px;top:28px;width:16px;height:1px;background:repeating-linear-gradient(90deg,#c4c4c4 0 2px,rgba(0,0,0,0) 2px 2.6px,#c4c4c4 2.6px 4px,rgba(0,0,0,0) 4px 5px)"></div><div class="a" style="left:9px;top:31.0px;width:55px;height:1px;background:repeating-linear-gradient(90deg,#777 0 2px,rgba(0,0,0,0) 2px 2.6px,#777 2.6px 4px,rgba(0,0,0,0) 4px 5px)"></div><div class="a" style="left:9px;top:33.6px;width:55px;height:1px;background:repeating-linear-gradient(90deg,#777 0 2px,rgba(0,0,0,0) 2px 2.6px,#777 2.6px 4px,rgba(0,0,0,0) 4px 5px)"></div><div class="a" style="left:9px;top:36.2px;width:18px;height:1px;background:repeating-linear-gradient(90deg,#777 0 2px,rgba(0,0,0,0) 2px 2.6px,#777 2.6px 4px,rgba(0,0,0,0) 4px 5px)"></div><div class="a" style="left:8px;top:40px;width:42px;height:1px;background:linear-gradient(90deg,#666,rgba(120,120,120,0))"></div><div class="a" style="left:9px;top:43px;width:18px;height:1px;background:repeating-linear-gradient(90deg,#888 0 2px,rgba(0,0,0,0) 2px 2.6px,#888 2.6px 4px,rgba(0,0,0,0) 4px 5px)"></div><div class="a" style="left:46px;top:43px;width:20px;height:1px;background:repeating-linear-gradient(90deg,#8e9ed8 0 2px,rgba(0,0,0,0) 2px 2.6px,#8e9ed8 2.6px 4px,rgba(0,0,0,0) 4px 5px)"></div><div class="a" style="left:9px;top:47px;width:16px;height:1px;background:repeating-linear-gradient(90deg,#c4c4c4 0 2px,rgba(0,0,0,0) 2px 2.6px,#c4c4c4 2.6px 4px,rgba(0,0,0,0) 4px 5px)"></div><div class="a" style="left:9px;top:51.0px;width:55px;height:1px;background:repeating-linear-gradient(90deg,#888 0 2px,rgba(0,0,0,0) 2px 2.6px,#888 2.6px 4px,rgba(0,0,0,0) 4px 5px)"></div><div class="a" style="left:9px;top:53.6px;width:55px;height:1px;background:repeating-linear-gradient(90deg,#888 0 2px,rgba(0,0,0,0) 2px 2.6px,#888 2.6px 4px,rgba(0,0,0,0) 4px 5px)"></div><div class="a" style="left:9px;top:56.2px;width:18px;height:1px;background:repeating-linear-gradient(90deg,#888 0 2px,rgba(0,0,0,0) 2px 2.6px,#888 2.6px 4px,rgba(0,0,0,0) 4px 5px)"></div></div>
<div class="a" style="left:28px;top:632px;width:94px;height:70px;background:radial-gradient(ellipse 75% 75% at 56% 56%, #ffffff 0%, #fafafa 30%, #ececec 70%, #dcdcdc 100%);overflow:hidden"><div class="a" style="left:0;top:7px;width:78px;height:12px;background:#0383d0"></div><div class="t" style="left:7px;top:10px;font-size:6.5px;color:#fff;letter-spacing:-0.355px">Awards and Certifications</div></div>
<div class="a" style="left:272px;top:161px;width:629px;height:472px;background:radial-gradient(ellipse 75% 75% at 56% 56%, #ffffff 0%, #fafafa 30%, #ececec 70%, #dcdcdc 100%);box-shadow:0 0 0 1px #cdcdcd inset;overflow:hidden"><div class="a" style="left:0;top:-1px;width:629px;height:473px"><div class="a" style="left:1px;top:181px;width:365px;height:129px;background:#0383d0;"></div>
<div class="t" style="left:46.80px;top:201.66px;font-size:18px;color:#fff;letter-spacing:0.155px;text-shadow:1px 1px 2px rgba(0,0,0,.35);">Resume of</div>
<div class="t" style="left:46.60px;top:235.49px;font-size:26px;color:#fff;font-weight:bold;letter-spacing:-0.2px;text-shadow:1px 1px 2px rgba(0,0,0,.35);">JOHN DOE</div>
<div class="t" style="left:47.80px;top:274.23px;font-size:14.5px;color:#fff;font-style:italic;letter-spacing:-0.085px;text-shadow:1px 1px 2px rgba(0,0,0,.35);">This is a sample text for your job title</div>
<div class="t" style="left:46.90px;top:340.80px;font-size:13px;color:#595959;letter-spacing:-0.029px;">Date of Birth:</div>
<div class="t" style="left:151.20px;top:340.80px;font-size:13px;color:#595959;letter-spacing:-0.325px;">19 December, 1982</div>
<div class="t" style="left:46.90px;top:358.40px;font-size:13px;color:#595959;letter-spacing:-0.188px;">Place of Birth:</div>
<div class="t" style="left:151.20px;top:358.40px;font-size:13px;color:#595959;letter-spacing:-0.357px;">Boston</div>
<div class="t" style="left:46.90px;top:375.90px;font-size:13px;color:#595959;letter-spacing:0.052px;">Nationality:</div>
<div class="t" style="left:151.20px;top:375.90px;font-size:13px;color:#595959;letter-spacing:-0.246px;">American</div>
<div class="t" style="left:46.90px;top:393.50px;font-size:13px;color:#595959;letter-spacing:-0.078px;">Marital Status:</div>
<div class="t" style="left:151.20px;top:393.50px;font-size:13px;color:#595959;letter-spacing:-0.063px;">Unmarried</div>
<div class="t" style="left:46.90px;top:411.10px;font-size:13px;color:#595959;letter-spacing:-0.17px;">Present resident in London</div>
<div class="t" style="left:525.98px;top:222.00px;font-size:13px;color:#404040;font-weight:bold;">Phone</div>
<div class="t" style="left:493.00px;top:239.60px;font-size:13px;color:#595959;letter-spacing:-0.294px;">012 34 56 78</div>
<div class="t" style="left:531.01px;top:274.60px;font-size:13px;color:#404040;font-weight:bold;">Email</div>
<div class="t" style="left:438.31px;top:292.20px;font-size:13px;color:#595959;letter-spacing:-0.078px;">john@slidehunter.com</div>
<div class="t" style="left:513.67px;top:332.40px;font-size:13px;color:#404040;font-weight:bold;">Address</div>
<div class="t" style="left:470.30px;top:349.60px;font-size:13px;color:#595959;letter-spacing:-0.322px;">4568 ANY Street,</div>
<div class="t" style="left:426.71px;top:366.30px;font-size:13px;color:#595959;letter-spacing:-0.086px;">Slidehunter, Powerpoint.</div>
<svg class="a" style="left:420px;top:377px;" width="150" height="6" viewBox="0 0 150 6"><path d="M6.5 4L8.5 2.5L10.5 4L12.5 2.5L14.5 4L16.5 2.5L18.5 4L20.5 2.5L22.5 4L24.5 2.5L26.5 4L28.5 2.5L30.5 4L32.5 2.5L34.5 4L36.5 2.5L38.5 4L40.5 2.5L42.5 4L44.5 2.5L46.5 4L48.5 2.5L50.5 4L52.5 2.5L54.5 4L56.5 2.5L58.5 4L60.5 2.5L62.5 4L64.5 2.5L66.5 4L68.5 2.5L70.5 4L72.5 2.5L74.5 4" fill="none" stroke="#e5474a" stroke-width="1.05"/><path d="M76 4L78 2.5L80 4L82 2.5L84 4L86 2.5L88 4L90 2.5L92 4L94 2.5L96 4L98 2.5L100 4L102 2.5L104 4L106 2.5L108 4L110 2.5L112 4L114 2.5L116 4L118 2.5L120 4L122 2.5L124 4L126 2.5L128 4L130 2.5L132 4L134 2.5L136 4L138 2.5L140 4L142 2.5L144 4" fill="none" stroke="#e5474a" stroke-width="1.05"/></svg>
<div class="a" style="left:414px;top:39px;width:156px;height:156px;background:#fff;border-radius:6px;box-shadow:0 0 1px 1px rgba(0,0,0,.38), 1px 1px 3px rgba(0,0,0,.3);"></div>
<div class="a" style="left:424px;top:49px;width:136px;height:136px;background:#d9d9d9;"></div>
<div class="t" style="left:438.20px;top:91.38px;font-size:22px;color:#404040;letter-spacing:-0.094px;">Your Photo</div>
<div class="t" style="left:469.30px;top:120.58px;font-size:22px;color:#404040;letter-spacing:-0.662px;">Here</div>
<div class="t" style="left:486.50px;top:424.18px;font-size:22px;color:#fff;font-style:italic;letter-spacing:-1.98px;-webkit-text-stroke:0.4px #fff;text-shadow:0 0 1px rgba(0,0,0,.6),1px 1px 2px rgba(0,0,0,.5);">Slide</div>
<svg class="a" style="left:532px;top:418px;filter:drop-shadow(1px 1px 1px rgba(0,0,0,.35));" width="78" height="36" viewBox="0 0 78 36"><g transform="translate(0.7,0.9)">
<path d="M0 18L6 8 10.9 2 16 5 21.9 4.1 28 1 34.2 0 41 3 49.2 4.1 54 1 58.8 1.4 65.6 3.4 70 8 75.9 17.8 72 22 68.3 26.6 64 31 60.1 32.1 56 30 51.9 30.7 46 33 41 32.1 36 30 30.1 29.4 25 33 20.5 33.5 15 30 9.6 28 4 24z" fill="#d2260c"/>
<path d="M28 1L34.2 0 41 3 38 8 30 6z" fill="#e35a3c" opacity=".55"/>
<path d="M54 1L58.8 1.4 65.6 3.4 62 7 55 5z" fill="#e35a3c" opacity=".5"/>
<path d="M20.5 33.5L25 33 30.1 29.4 26 26 19 28z" fill="#b81e08" opacity=".6"/>
</g></svg>
<div class="t" style="left:538.00px;top:428.46px;font-size:16px;color:#fff;font-weight:bold;letter-spacing:-0.341px;text-shadow:1px 1px 1px rgba(0,0,0,.3);">HUNTER</div></div></div>
<div class="a" style="left:28px;top:170px;width:629px;height:473px;background:radial-gradient(ellipse 75% 75% at 56% 56%, #ffffff 0%, #fafafa 30%, #ececec 70%, #dcdcdc 100%);overflow:hidden;transform:scale(0.1502);transform-origin:0 0"><div class="a" style="left:1px;top:181px;width:365px;height:129px;background:#0383d0;"></div>
<div class="t" style="left:46.80px;top:201.66px;font-size:18px;color:#fff;letter-spacing:0.155px;text-shadow:1px 1px 2px rgba(0,0,0,.35);">Resume of</div>
<div class="t" style="left:46.60px;top:235.49px;font-size:26px;color:#fff;font-weight:bold;letter-spacing:-0.2px;text-shadow:1px 1px 2px rgba(0,0,0,.35);">JOHN DOE</div>
<div class="t" style="left:47.80px;top:274.23px;font-size:14.5px;color:#fff;font-style:italic;letter-spacing:-0.085px;text-shadow:1px 1px 2px rgba(0,0,0,.35);">This is a sample text for your job title</div>
<div class="t" style="left:46.90px;top:340.80px;font-size:13px;color:#595959;letter-spacing:-0.029px;">Date of Birth:</div>
<div class="t" style="left:151.20px;top:340.80px;font-size:13px;color:#595959;letter-spacing:-0.325px;">19 December, 1982</div>
<div class="t" style="left:46.90px;top:358.40px;font-size:13px;color:#595959;letter-spacing:-0.188px;">Place of Birth:</div>
<div class="t" style="left:151.20px;top:358.40px;font-size:13px;color:#595959;letter-spacing:-0.357px;">Boston</div>
<div class="t" style="left:46.90px;top:375.90px;font-size:13px;color:#595959;letter-spacing:0.052px;">Nationality:</div>
<div class="t" style="left:151.20px;top:375.90px;font-size:13px;color:#595959;letter-spacing:-0.246px;">American</div>
<div class="t" style="left:46.90px;top:393.50px;font-size:13px;color:#595959;letter-spacing:-0.078px;">Marital Status:</div>
<div class="t" style="left:151.20px;top:393.50px;font-size:13px;color:#595959;letter-spacing:-0.063px;">Unmarried</div>
<div class="t" style="left:46.90px;top:411.10px;font-size:13px;color:#595959;letter-spacing:-0.17px;">Present resident in London</div>
<div class="t" style="left:525.98px;top:222.00px;font-size:13px;color:#404040;font-weight:bold;">Phone</div>
<div class="t" style="left:493.00px;top:239.60px;font-size:13px;color:#595959;letter-spacing:-0.294px;">012 34 56 78</div>
<div class="t" style="left:531.01px;top:274.60px;font-size:13px;color:#404040;font-weight:bold;">Email</div>
<div class="t" style="left:438.31px;top:292.20px;font-size:13px;color:#595959;letter-spacing:-0.078px;">john@slidehunter.com</div>
<div class="t" style="left:513.67px;top:332.40px;font-size:13px;color:#404040;font-weight:bold;">Address</div>
<div class="t" style="left:470.30px;top:349.60px;font-size:13px;color:#595959;letter-spacing:-0.322px;">4568 ANY Street,</div>
<div class="t" style="left:426.71px;top:366.30px;font-size:13px;color:#595959;letter-spacing:-0.086px;">Slidehunter, Powerpoint.</div>
<svg class="a" style="left:420px;top:377px;" width="150" height="6" viewBox="0 0 150 6"><path d="M6.5 4L8.5 2.5L10.5 4L12.5 2.5L14.5 4L16.5 2.5L18.5 4L20.5 2.5L22.5 4L24.5 2.5L26.5 4L28.5 2.5L30.5 4L32.5 2.5L34.5 4L36.5 2.5L38.5 4L40.5 2.5L42.5 4L44.5 2.5L46.5 4L48.5 2.5L50.5 4L52.5 2.5L54.5 4L56.5 2.5L58.5 4L60.5 2.5L62.5 4L64.5 2.5L66.5 4L68.5 2.5L70.5 4L72.5 2.5L74.5 4" fill="none" stroke="#e5474a" stroke-width="1.05"/><path d="M76 4L78 2.5L80 4L82 2.5L84 4L86 2.5L88 4L90 2.5L92 4L94 2.5L96 4L98 2.5L100 4L102 2.5L104 4L106 2.5L108 4L110 2.5L112 4L114 2.5L116 4L118 2.5L120 4L122 2.5L124 4L126 2.5L128 4L130 2.5L132 4L134 2.5L136 4L138 2.5L140 4L142 2.5L144 4" fill="none" stroke="#e5474a" stroke-width="1.05"/></svg>
<div class="a" style="left:414px;top:39px;width:156px;height:156px;background:#fff;border-radius:6px;box-shadow:0 0 1px 1px rgba(0,0,0,.38), 1px 1px 3px rgba(0,0,0,.3);"></div>
<div class="a" style="left:424px;top:49px;width:136px;height:136px;background:#d9d9d9;"></div>
<div class="t" style="left:438.20px;top:91.38px;font-size:22px;color:#404040;letter-spacing:-0.094px;">Your Photo</div>
<div class="t" style="left:469.30px;top:120.58px;font-size:22px;color:#404040;letter-spacing:-0.662px;">Here</div>
<div class="t" style="left:486.50px;top:424.18px;font-size:22px;color:#fff;font-style:italic;letter-spacing:-1.98px;-webkit-text-stroke:0.4px #fff;text-shadow:0 0 1px rgba(0,0,0,.6),1px 1px 2px rgba(0,0,0,.5);">Slide</div>
<svg class="a" style="left:532px;top:418px;filter:drop-shadow(1px 1px 1px rgba(0,0,0,.35));" width="78" height="36" viewBox="0 0 78 36"><g transform="translate(0.7,0.9)">
<path d="M0 18L6 8 10.9 2 16 5 21.9 4.1 28 1 34.2 0 41 3 49.2 4.1 54 1 58.8 1.4 65.6 3.4 70 8 75.9 17.8 72 22 68.3 26.6 64 31 60.1 32.1 56 30 51.9 30.7 46 33 41 32.1 36 30 30.1 29.4 25 33 20.5 33.5 15 30 9.6 28 4 24z" fill="#d2260c"/>
<path d="M28 1L34.2 0 41 3 38 8 30 6z" fill="#e35a3c" opacity=".55"/>
<path d="M54 1L58.8 1.4 65.6 3.4 62 7 55 5z" fill="#e35a3c" opacity=".5"/>
<path d="M20.5 33.5L25 33 30.1 29.4 26 26 19 28z" fill="#b81e08" opacity=".6"/>
</g></svg>
<div class="t" style="left:538.00px;top:428.46px;font-size:16px;color:#fff;font-weight:bold;letter-spacing:-0.341px;text-shadow:1px 1px 1px rgba(0,0,0,.3);">HUNTER</div></div>
<div class="a" style="left:164px;top:644px;width:860px;height:1px;background:#d2d2d2;"></div>
<div class="a" style="left:164px;top:645px;width:860px;height:2px;background:#e9e9e9;"></div>
<div class="a" style="left:0px;top:647px;width:1024px;height:1px;background:#d6d6d6;"></div>
<div class="a" style="left:0px;top:648px;width:1024px;height:22px;background:#f1f1f1;"></div>
<div class="a" style="left:1007px;top:153px;width:15px;height:437px;background:#dadada;"></div>
<div class="a" style="left:1007px;top:153px;width:15px;height:15px;background:#fff;border:1px solid #a6a6a6"></div>
<svg class="a" style="left:1011px;top:157px;" width="7" height="5" viewBox="0 0 7 5"><path d="M0 4.6L3.5 0.6 7 4.6z" fill="#686868"/></svg>
<div class="a" style="left:1007px;top:167px;width:15px;height:35px;background:#fff;border:1px solid #a6a6a6"></div>
<div class="a" style="left:1007px;top:575px;width:15px;height:15px;background:#fff;border:1px solid #d0d0d0"></div>
<svg class="a" style="left:1011px;top:580px;" width="7" height="5" viewBox="0 0 7 5"><path d="M0 0.4h7L3.5 4.4z" fill="#686868"/></svg>
<svg class="a" style="left:1010px;top:594px;" width="9" height="9" viewBox="0 0 9 9"><path d="M0 4L4.5 0 9 4z M0 8.5L4.5 4.5 9 8.5z" fill="#6a6a6a"/></svg>
<svg class="a" style="left:1010px;top:612px;" width="9" height="9" viewBox="0 0 9 9"><path d="M0 0h9L4.5 4z M0 4.5h9L4.5 8.5z" fill="#6a6a6a"/></svg>
<div class="t" style="left:8.20px;top:652.59px;font-size:11px;color:#555;letter-spacing:-0.01px;">Slide 1 of 12</div>
<svg class="a" style="left:88px;top:651px;" width="16" height="14" viewBox="0 0 16 14"><path d="M0.6 1.2c2.5-.7 5-.5 7 1 2-1.5 4.5-1.7 7-1V12c-2.5-.7-5-.5-7 1-2-1.5-4.5-1.7-7-1z" fill="none" stroke="#666" stroke-width="1.1"/>
<path d="M7.6 2.2v10.6" stroke="#666" stroke-width="1"/><path d="M9 10l1-3 4-4 1.5 1.5-4 4z" fill="#f1f1f1" stroke="#666" stroke-width="1"/></svg>
<svg class="a" style="left:515px;top:651px;" width="12" height="13" viewBox="0 0 12 13"><path d="M3 3.5L6 0.8 9 3.5z" fill="#666"/><path d="M0.5 6h11M0.5 8.5h11M0.5 11h11" stroke="#777" stroke-width="1"/></svg>
<div class="t" style="left:531.70px;top:652.99px;font-size:11px;color:#555;letter-spacing:-0.013px;">Notes</div>
<svg class="a" style="left:581px;top:651px;" width="13" height="13" viewBox="0 0 13 13"><path d="M0.5 0.5h12v8.5H6l-3 3.5V9H0.5z" fill="#666"/></svg>
<div class="t" style="left:597.80px;top:652.99px;font-size:11px;color:#555;letter-spacing:-0.241px;">Comments</div>
<div class="a" style="left:669px;top:647px;width:37px;height:22px;background:#c8c8c8;"></div>
<svg class="a" style="left:680px;top:651px;" width="15" height="13" viewBox="0 0 15 13"><rect x="0.5" y="0.5" width="14" height="12" fill="none" stroke="#666" stroke-width="1"/><rect x="3" y="2.5" width="9" height="5" fill="none" stroke="#666" stroke-width="1"/><path d="M3 10h9" stroke="#666" stroke-width="1"/></svg>
<svg class="a" style="left:717px;top:651px;" width="15" height="14" viewBox="0 0 15 14"><rect x="0.5" y="0.5" width="5.5" height="5" fill="none" stroke="#666"/><rect x="8.5" y="0.5" width="5.5" height="5" fill="none" stroke="#666"/><rect x="0.5" y="8.5" width="5.5" height="5" fill="none" stroke="#666"/><rect x="8.5" y="8.5" width="5.5" height="5" fill="none" stroke="#666"/></svg>
<svg class="a" style="left:753px;top:651px;" width="15" height="13" viewBox="0 0 15 13"><path d="M0.5 1h6.5v11H0.5zM8 1h6.5v11H8z" fill="none" stroke="#666"/><path d="M2 3.5h3.5M2 5.5h3.5M2 7.5h3.5M2 9.5h3.5M9.5 3.5H13M9.5 5.5H13M9.5 7.5H13M9.5 9.5H13" stroke="#888" stroke-width="0.9"/></svg>
<svg class="a" style="left:792px;top:652px;" width="14" height="12" viewBox="0 0 14 12"><path d="M0 1h14" stroke="#666" stroke-width="1.4"/><rect x="1.5" y="1.5" width="11" height="5.5" fill="none" stroke="#666"/><path d="M7 7v3.5M4 11h6" stroke="#666"/></svg>
<div class="a" style="left:822px;top:657px;width:6px;height:2px;background:#555;"></div>
<div class="a" style="left:832px;top:657px;width:100px;height:1px;background:#a8a8a8;"></div>
<div class="a" style="left:882px;top:655px;width:1px;height:5px;background:#a8a8a8;"></div>
<div class="a" style="left:862px;top:652px;width:4px;height:11px;background:#5a5a5a;"></div>
<svg class="a" style="left:936px;top:653px;" width="9" height="9" viewBox="0 0 9 9"><path d="M4.5 0v9M0 4.5h9" stroke="#555" stroke-width="1.8"/></svg>
<div class="t" style="left:958.00px;top:653.39px;font-size:11px;color:#555;letter-spacing:-0.466px;">66%</div>
<svg class="a" style="left:992px;top:651px;" width="15" height="15" viewBox="0 0 15 15"><rect x="0.5" y="0.5" width="13.5" height="13.5" fill="none" stroke="#777"/><path d="M7.25 2v3M5.8 3.5l1.45-1.5 1.45 1.5M7.25 12.5v-3M5.8 11l1.45 1.5 1.45-1.5M2 7.25h3M3.5 5.8L2 7.25l1.5 1.45M12.5 7.25h-3M11 5.8l1.5 1.45L11 8.7" fill="none" stroke="#666" stroke-width="0.9"/></svg>
<div class="a" style="left:0px;top:0px;width:1px;height:670px;background:#b7472a;"></div>
<div class="a" style="left:1023px;top:0px;width:1px;height:670px;background:#b7472a;"></div>
<div class="a" style="left:0px;top:669px;width:1024px;height:1px;background:#b7472a;"></div>
</body></html>
